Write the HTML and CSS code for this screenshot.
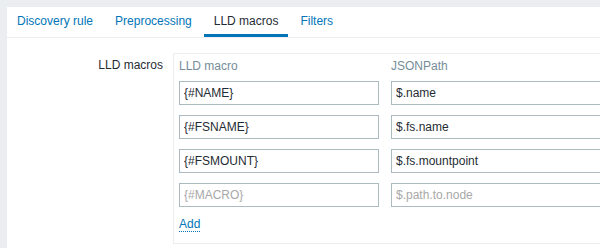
FILE: index.html
```html
<!DOCTYPE html>
<html lang="en">
<head>
  <meta charset="UTF-8">
  <title>LLD macros</title>
  <link rel="stylesheet" href="styles.css">
</head>
<body>
  <div class="panel">
    <ul class="tabs">
      <li><a href="#">Discovery rule</a></li>
      <li><a href="#">Preprocessing</a></li>
      <li class="active"><a href="#">LLD macros</a></li>
      <li><a href="#">Filters</a></li>
    </ul>
    <div class="form">
      <div class="form-row">
        <label class="form-label">LLD macros</label>
        <div class="macro-box">
          <div class="macro-row macro-head">
            <div class="col-macro">LLD macro</div>
            <div class="col-path">JSONPath</div>
          </div>
          <div class="macro-row">
            <input class="col-macro" type="text" value="{#NAME}">
            <input class="col-path" type="text" value="$.name">
          </div>
          <div class="macro-row">
            <input class="col-macro" type="text" value="{#FSNAME}">
            <input class="col-path" type="text" value="$.fs.name">
          </div>
          <div class="macro-row">
            <input class="col-macro" type="text" value="{#FSMOUNT}">
            <input class="col-path" type="text" value="$.fs.mountpoint">
          </div>
          <div class="macro-row">
            <input class="col-macro" type="text" placeholder="{#MACRO}">
            <input class="col-path" type="text" placeholder="$.path.to.node">
          </div>
          <div class="add-row"><a href="#" class="link-action">Add</a></div>
        </div>
      </div>
    </div>
  </div>
</body>
</html>
```
FILE: styles.css
```css
/* General styles */
body {
  margin: 0;
  padding: 7px 0 0 7px;
  background: #ebeef0;
  font-family: 'Liberation Sans', Arial, sans-serif;
  font-size: 12px;
  color: #1f2c33;
  overflow: hidden;
  height: 248px;
  box-sizing: border-box;
}

.panel {
  background: #ffffff;
  height: 241px;
  overflow: hidden;
}

/* Tabs */
.tabs {
  list-style: none;
  margin: 0;
  padding: 0;
  display: flex;
  height: 30px;
  border-bottom: 1px solid #ebeef0;
}

.tabs li {
  border-bottom: 3px solid transparent;
  margin-right: 2px;
}

.tabs li a {
  display: block;
  padding: 0 10px;
  line-height: 28px;
  color: #0275b8;
  text-decoration: none;
}

.tabs li.active {
  border-bottom-color: #0275b8;
}

.tabs li.active a {
  color: #1f2c33;
}

/* Form */
.form {
  padding-top: 15px;
}

.form-row {
  display: flex;
  gap: 10px;
}

.form-label {
  width: 156px;
  flex-shrink: 0;
  text-align: right;
  line-height: 14px;
  padding-top: 5px;
}

.macro-box {
  border: 1px solid #ebeef0;
  padding: 0 5px;
  width: 500px;
  flex-shrink: 0;
  height: 191px;
  box-sizing: border-box;
}

.macro-row {
  display: flex;
  gap: 12px;
  margin-bottom: 10px;
}

.macro-head {
  color: #768d99;
  line-height: 14px;
  margin-top: 5px;
  margin-bottom: 8px;
}

.col-macro {
  width: 200px;
  flex-shrink: 0;
}

.col-path {
  width: 300px;
  flex-shrink: 0;
}

input[type="text"] {
  height: 24px;
  box-sizing: border-box;
  border: 1px solid #acbbc2;
  padding: 0 4px;
  margin: 0;
  font-family: 'Liberation Sans', Arial, sans-serif;
  font-size: 12px;
  color: #1f2c33;
  background: #ffffff;
  outline: none;
}

input::placeholder {
  color: #a8a8a8;
}

.add-row {
  line-height: 14px;
}

.link-action {
  color: #0275b8;
  text-decoration: none;
  border-bottom: 1px dotted #0275b8;
}
```
